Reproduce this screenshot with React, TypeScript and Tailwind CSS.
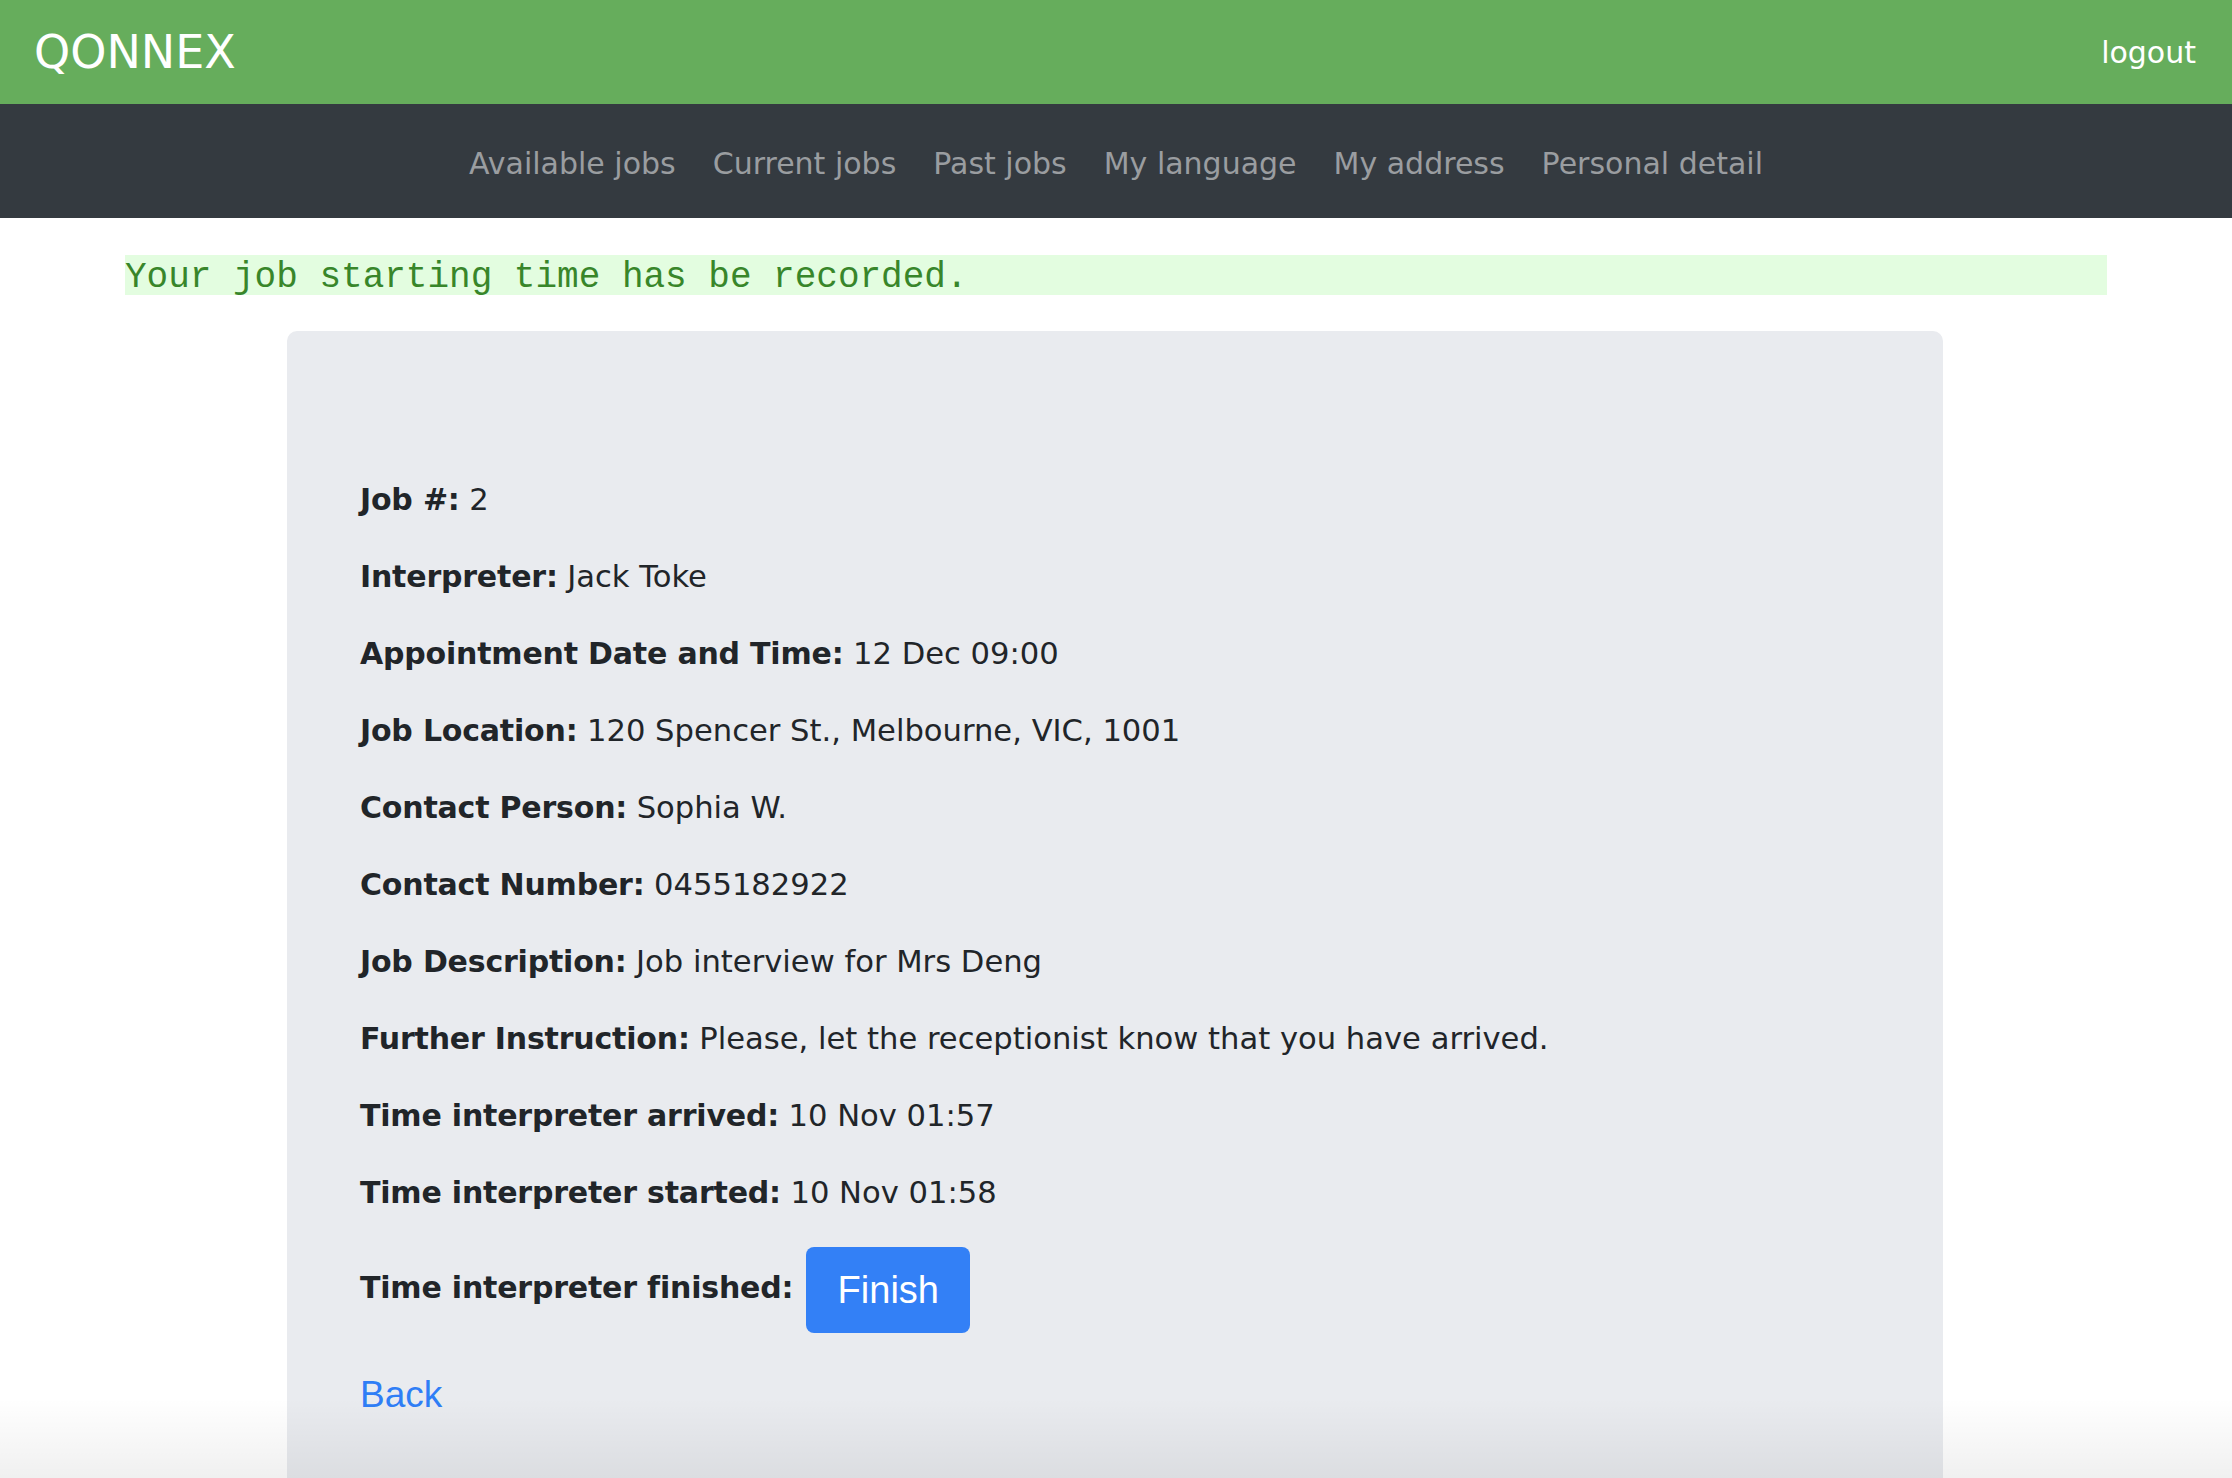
import React from "react";

const rows: [string, string][] = [
  ["Job #:", "2"],
  ["Interpreter:", "Jack Toke"],
  ["Appointment Date and Time:", "12 Dec 09:00"],
  ["Job Location:", "120 Spencer St., Melbourne, VIC, 1001"],
  ["Contact Person:", "Sophia W."],
  ["Contact Number:", "0455182922"],
  ["Job Description:", "Job interview for Mrs Deng"],
  ["Further Instruction:", "Please, let the receptionist know that you have arrived."],
  ["Time interpreter arrived:", "10 Nov 01:57"],
  ["Time interpreter started:", "10 Nov 01:58"],
];

const navItems = ["Available jobs", "Current jobs", "Past jobs", "My language", "My address", "Personal detail"];

export default function App() {
  return (
    <div className="min-h-screen bg-white font-['DejaVu_Sans',sans-serif] relative overflow-hidden h-[1478px]">
      <header className="h-[104px] bg-[#66ad5c] flex items-center justify-between pl-[34px] pr-[36px]">
        <div className="text-white text-[46px] leading-none">QONNEX</div>
        <a className="text-white text-[30px] leading-none pt-[2px]">logout</a>
      </header>
      <nav className="h-[114px] bg-[#343a40] flex items-center justify-center gap-[37px] pt-[5px]">
        {navItems.map((n) => (
          <a key={n} className="text-[#9a9da0] text-[30px] leading-none">
            {n}
          </a>
        ))}
      </nav>
      <div className="mx-[125px] mt-[37px] h-[40px] bg-[#e3fde0] text-[#38862a] font-['Liberation_Mono',monospace] text-[36px] leading-[40px] pt-[3px] whitespace-pre">
        Your job starting time has be recorded.
      </div>
      <div className="ml-[287px] w-[1656px] mt-[36px] bg-[#e9ebef] rounded-t-[10px] pl-[73px] pt-[146px] pb-[200px] text-[#212529]">
        <div className="flex flex-col gap-[32px]">
          {rows.map(([k, v]) => (
            <div key={k} className="text-[30px] leading-[45px]">
              <span className="font-bold tracking-[-0.2px]">{k}</span> <span className="text-[30.6px]">{v}</span>
            </div>
          ))}
          <div className="flex items-center gap-[13px] h-[86px]">
            <span className="font-bold text-[30px] leading-[45px] pb-[5px] tracking-[-0.2px]">Time interpreter finished:</span>
            <button className="w-[164px] h-[86px] rounded-[8px] bg-[#3380f6] text-white font-['Liberation_Sans',sans-serif] text-[38px] leading-none">
              Finish
            </button>
          </div>
        </div>
        <a className="block mt-[35px] text-[#2f7ef6] font-['Liberation_Sans',sans-serif] text-[37px] leading-[54px]">Back</a>
      </div>
      <div className="pointer-events-none absolute left-0 right-0 bottom-0 h-[80px] bg-gradient-to-b from-transparent to-black/[0.06]" />
    </div>
  );
}
